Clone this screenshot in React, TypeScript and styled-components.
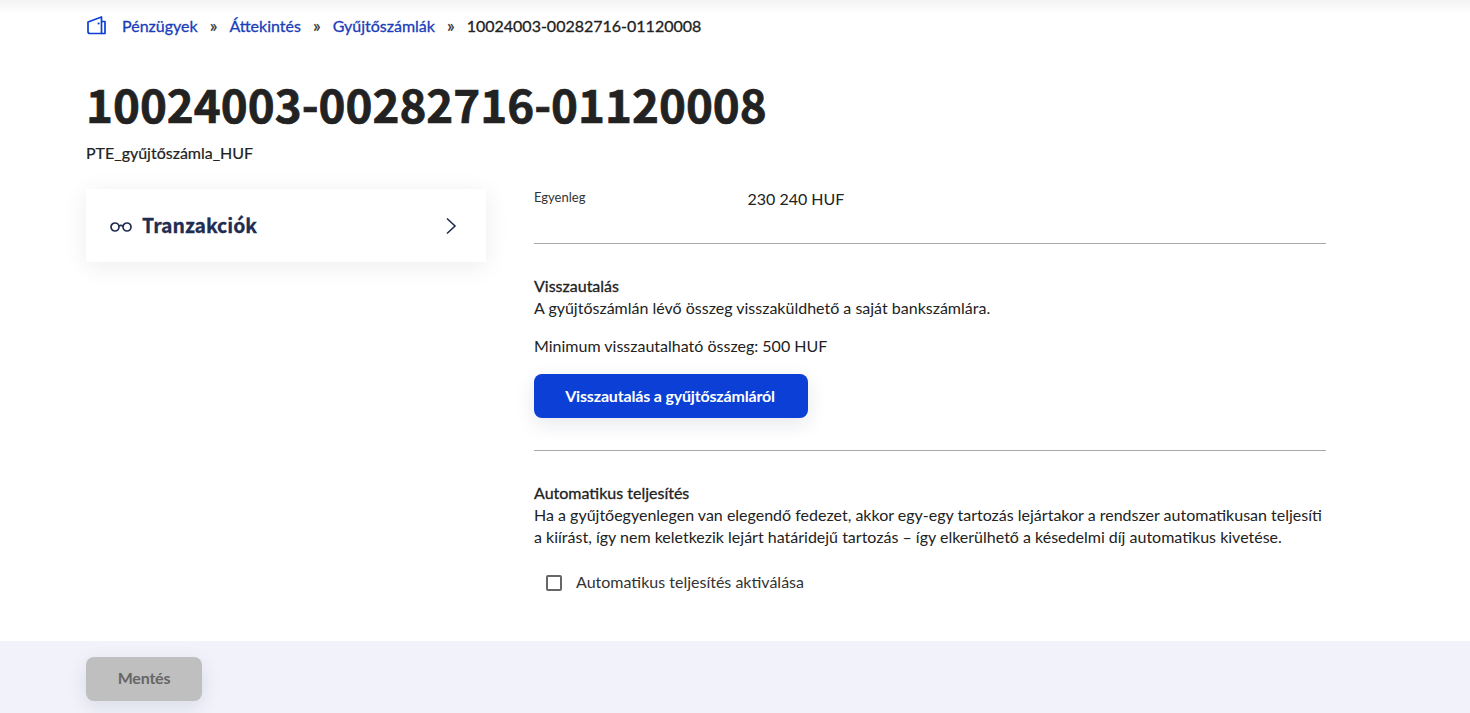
import React from "react";
import styled, { createGlobalStyle } from "styled-components";

const GlobalStyle = createGlobalStyle`
  html, body { margin: 0; padding: 0; background: #fff; }
  body { font-family: "Lato", "Liberation Sans", sans-serif; color: #222; overflow: hidden; }
`;

function WalletIcon() {
  return (
    <svg width="20" height="20" viewBox="0 0 20 20" fill="none" stroke="#0b3fd6" strokeWidth="1.700" strokeLinejoin="round">
      <path d="M2 7 15.500 2V18.500H4A2 2 0 0 1 2 16.500z" />
      <path d="M15.500 6.500H19V18.500H15.500" />
      <circle cx="12.600" cy="8.500" r="1.100" fill="#0b3fd6" stroke="none" />
    </svg>
  );
}

function GlassesIcon() {
  return (
    <svg width="22" height="12" viewBox="0 0 22 12" fill="none" stroke="#1f2d50" strokeWidth="1.700">
      <circle cx="5" cy="7" r="4" />
      <circle cx="17" cy="7" r="4" />
      <path d="M9 6.200c1.300-1 2.700-1 4 0" />
      <path d="M1.300 6 3 3M20.700 6 19 3" strokeWidth="1" />
    </svg>
  );
}

function ChevronIcon() {
  return (
    <svg width="12" height="18" viewBox="0 0 12 18" fill="none" stroke="#1f2d50" strokeWidth="1.600">
      <path d="M2 1.500 10 9 2 16.500" />
    </svg>
  );
}

export default function App() {
  return (
    <Page>
      <GlobalStyle />
      <Content>
        <Breadcrumbs>
          <WalletIcon />
          <CrumbLink $first>Pénzügyek</CrumbLink>
          <Separator>»</Separator>
          <CrumbLink>Áttekintés</CrumbLink>
          <Separator>»</Separator>
          <CrumbLink>Gyűjtőszámlák</CrumbLink>
          <Separator>»</Separator>
          <CrumbCurrent>10024003-00282716-01120008</CrumbCurrent>
        </Breadcrumbs>
        <Title>10024003-00282716-01120008</Title>
        <Subtitle>PTE_gyűjtőszámla_HUF</Subtitle>
        <Columns>
          <SideColumn>
            <SideCard>
              <GlassesIcon />
              <SideLabel>Tranzakciók</SideLabel>
              <ChevronIcon />
            </SideCard>
          </SideColumn>
          <MainColumn>
            <BalanceRow>
              <BalanceLabel>Egyenleg</BalanceLabel>
              <BalanceValue>230 240 HUF</BalanceValue>
            </BalanceRow>
            <Divider />
            <RefundSection>
              <SectionTitle>Visszautalás</SectionTitle>
              <Text>A gyűjtőszámlán lévő összeg visszaküldhető a saját bankszámlára.</Text>
              <MinimumText>Minimum visszautalható összeg: 500 HUF</MinimumText>
              <PrimaryButton>Visszautalás a gyűjtőszámláról</PrimaryButton>
            </RefundSection>
            <Divider />
            <AutoSection>
              <SectionTitle>Automatikus teljesítés</SectionTitle>
              <Text>
                Ha a gyűjtőegyenlegen van elegendő fedezet, akkor egy-egy tartozás lejártakor a rendszer automatikusan teljesíti
                a kiírást, így nem keletkezik lejárt határidejű tartozás – így elkerülhető a késedelmi díj automatikus kivetése.
              </Text>
              <CheckRow>
                <CheckBox />
                <CheckLabel>Automatikus teljesítés aktiválása</CheckLabel>
              </CheckRow>
            </AutoSection>
          </MainColumn>
        </Columns>
      </Content>
      <Footer>
        <SaveButton>Mentés</SaveButton>
      </Footer>
    </Page>
  );
}

const Page = styled.div`
  height: 713px;
  display: flex;
  flex-direction: column;
  background: linear-gradient(#f3f3f3 0, #fff 14px);
`;

const Content = styled.main`
  flex: 1;
  padding: 15px 144px 0 86px;
`;

const Breadcrumbs = styled.nav`
  display: flex;
  align-items: center;
  height: 20px;
  font-size: 16px;
  -webkit-text-stroke: 0.3px;
`;

const CrumbLink = styled.a<{ $first?: boolean }>`
  color: #1a3db8;
  margin-left: ${(p) => (p.$first ? "16px" : "0")};
`;

const Separator = styled.span`
  color: #333;
  margin: 0 12px;
  font-size: 18px;
`;

const CrumbCurrent = styled.span`
  color: #222;
`;

const Title = styled.h1`
  margin: 38px 0 0;
  font-family: "Noto Sans CJK JP", "Noto Sans", sans-serif;
  font-size: 45.700px;
  line-height: 60px;
  font-weight: 700;
  color: #222;
  -webkit-text-stroke: 0.7px;
`;

const Subtitle = styled.div`
  margin-top: 10px;
  font-size: 16px;
  line-height: 20px;
  color: #222;
  -webkit-text-stroke: 0.2px;
`;

const Columns = styled.div`
  display: flex;
  margin-top: 26px;
`;

const SideColumn = styled.aside`
  width: 448px;
  flex: none;
`;

const SideCard = styled.div`
  width: 400px;
  height: 73px;
  box-sizing: border-box;
  padding: 0 29px 0 24px;
  display: flex;
  align-items: center;
  background: #fff;
  box-shadow: 0 4px 24px rgba(20, 30, 60, 0.08);
`;

const SideLabel = styled.span`
  flex: 1;
  margin: 0 0 2px 10px;
  font-family: "Noto Sans CJK JP", "Noto Sans", sans-serif;
  font-size: 19.400px;
  font-weight: 700;
  color: #1f2d50;
  -webkit-text-stroke: 0.3px;
`;

const MainColumn = styled.section`
  flex: 1;
`;

const BalanceRow = styled.div`
  display: flex;
  height: 54px;
`;

const BalanceLabel = styled.span`
  width: 213.500px;
  font-size: 13px;
  line-height: 16px;
  color: #333;
`;

const BalanceValue = styled.span`
  font-size: 16px;
  line-height: 20px;
  color: #222;
`;

const Divider = styled.hr`
  margin: 0;
  border: 0;
  border-top: 1px solid #a8a8a8;
`;

const RefundSection = styled.div`
  padding: 32px 0;
`;

const AutoSection = styled.div`
  padding-top: 32px;
`;

const SectionTitle = styled.div`
  font-size: 16px;
  line-height: 20px;
  color: #222;
  -webkit-text-stroke: 0.3px;
`;

const Text = styled.div`
  margin-top: 1px;
  font-size: 16px;
  line-height: 22px;
  color: #222;
`;

const MinimumText = styled(Text)`
  margin-top: 16px;
`;

const PrimaryButton = styled.button`
  display: block;
  margin-top: 17px;
  padding: 0 2px 2px 0;
  width: 274px;
  height: 44px;
  border: 0;
  border-radius: 8px;
  background: #0b3fd6;
  color: #fff;
  font-family: inherit;
  font-size: 16px;
  font-weight: 700;
  letter-spacing: -0.17px;
  box-shadow: 0 6px 20px rgba(20, 30, 60, 0.1);
`;

const CheckRow = styled.label`
  display: flex;
  align-items: center;
  margin: 22px 0 0 11.500px;
`;

const CheckBox = styled.span`
  width: 16px;
  height: 16px;
  margin-top: 2px;
  box-sizing: border-box;
  border: 2px solid #666;
  border-radius: 2px;
`;

const CheckLabel = styled.span`
  margin-left: 14.500px;
  font-size: 16px;
  line-height: 24px;
  color: #333;
`;

const Footer = styled.footer`
  height: 72px;
  box-sizing: border-box;
  padding: 16px 86px 0;
  background: #f1f2fa;
`;

const SaveButton = styled.button`
  display: block;
  padding: 0 0 3px;
  width: 116px;
  height: 44px;
  border: 0;
  border-radius: 8px;
  background: #bfbfbf;
  color: #666;
  font-family: inherit;
  font-size: 16px;
  font-weight: 700;
  letter-spacing: -0.2px;
  box-shadow: 0 6px 20px rgba(20, 30, 60, 0.1);
`;
